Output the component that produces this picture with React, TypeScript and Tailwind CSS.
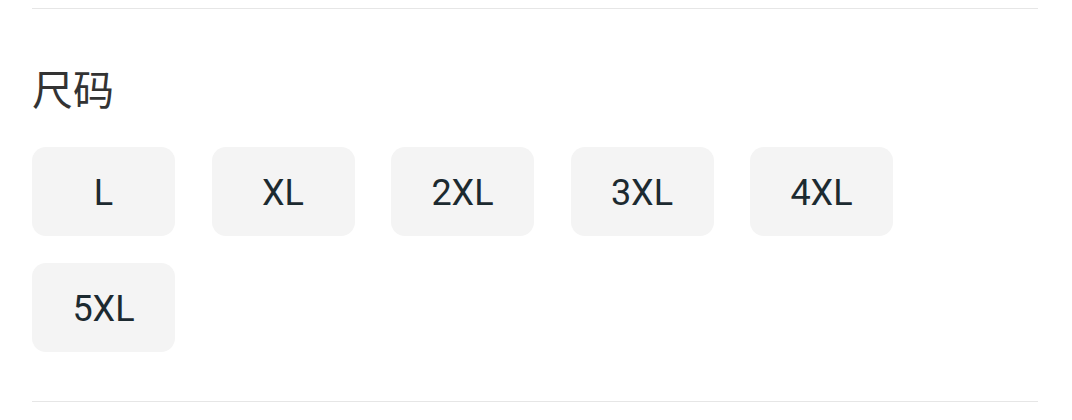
const sizes = ["L", "XL", "2XL", "3XL", "4XL", "5XL"];

function SizeButton({ label }: { label: string }) {
  return (
    <button className="w-[143px] h-[89px] rounded-[14px] bg-[#f4f4f4] flex items-center justify-center pt-[3px] text-[36px] text-[#1c2a30] font-['Roboto',sans-serif]">
      {label}
    </button>
  );
}

export default function App() {
  return (
    <div className="w-[1072px] h-[420px] bg-white px-8 pt-2">
      <div className="w-[1006px] border-t border-[#e6e6e6]">
        {/* Title */}
        <h2 className="mt-[58px] h-[40px] leading-[40px] text-[41px] text-[#333333] font-['Noto_Sans_CJK_SC',sans-serif]">
          尺码
        </h2>
        {/* Options */}
        <div className="mt-[40px] flex flex-wrap gap-x-[36.5px] gap-y-[27px] w-[900px]">
          {sizes.map((s) => (
            <SizeButton key={s} label={s} />
          ))}
        </div>
        <div className="mt-[49px] border-t border-[#e6e6e6]" />
      </div>
    </div>
  );
}
